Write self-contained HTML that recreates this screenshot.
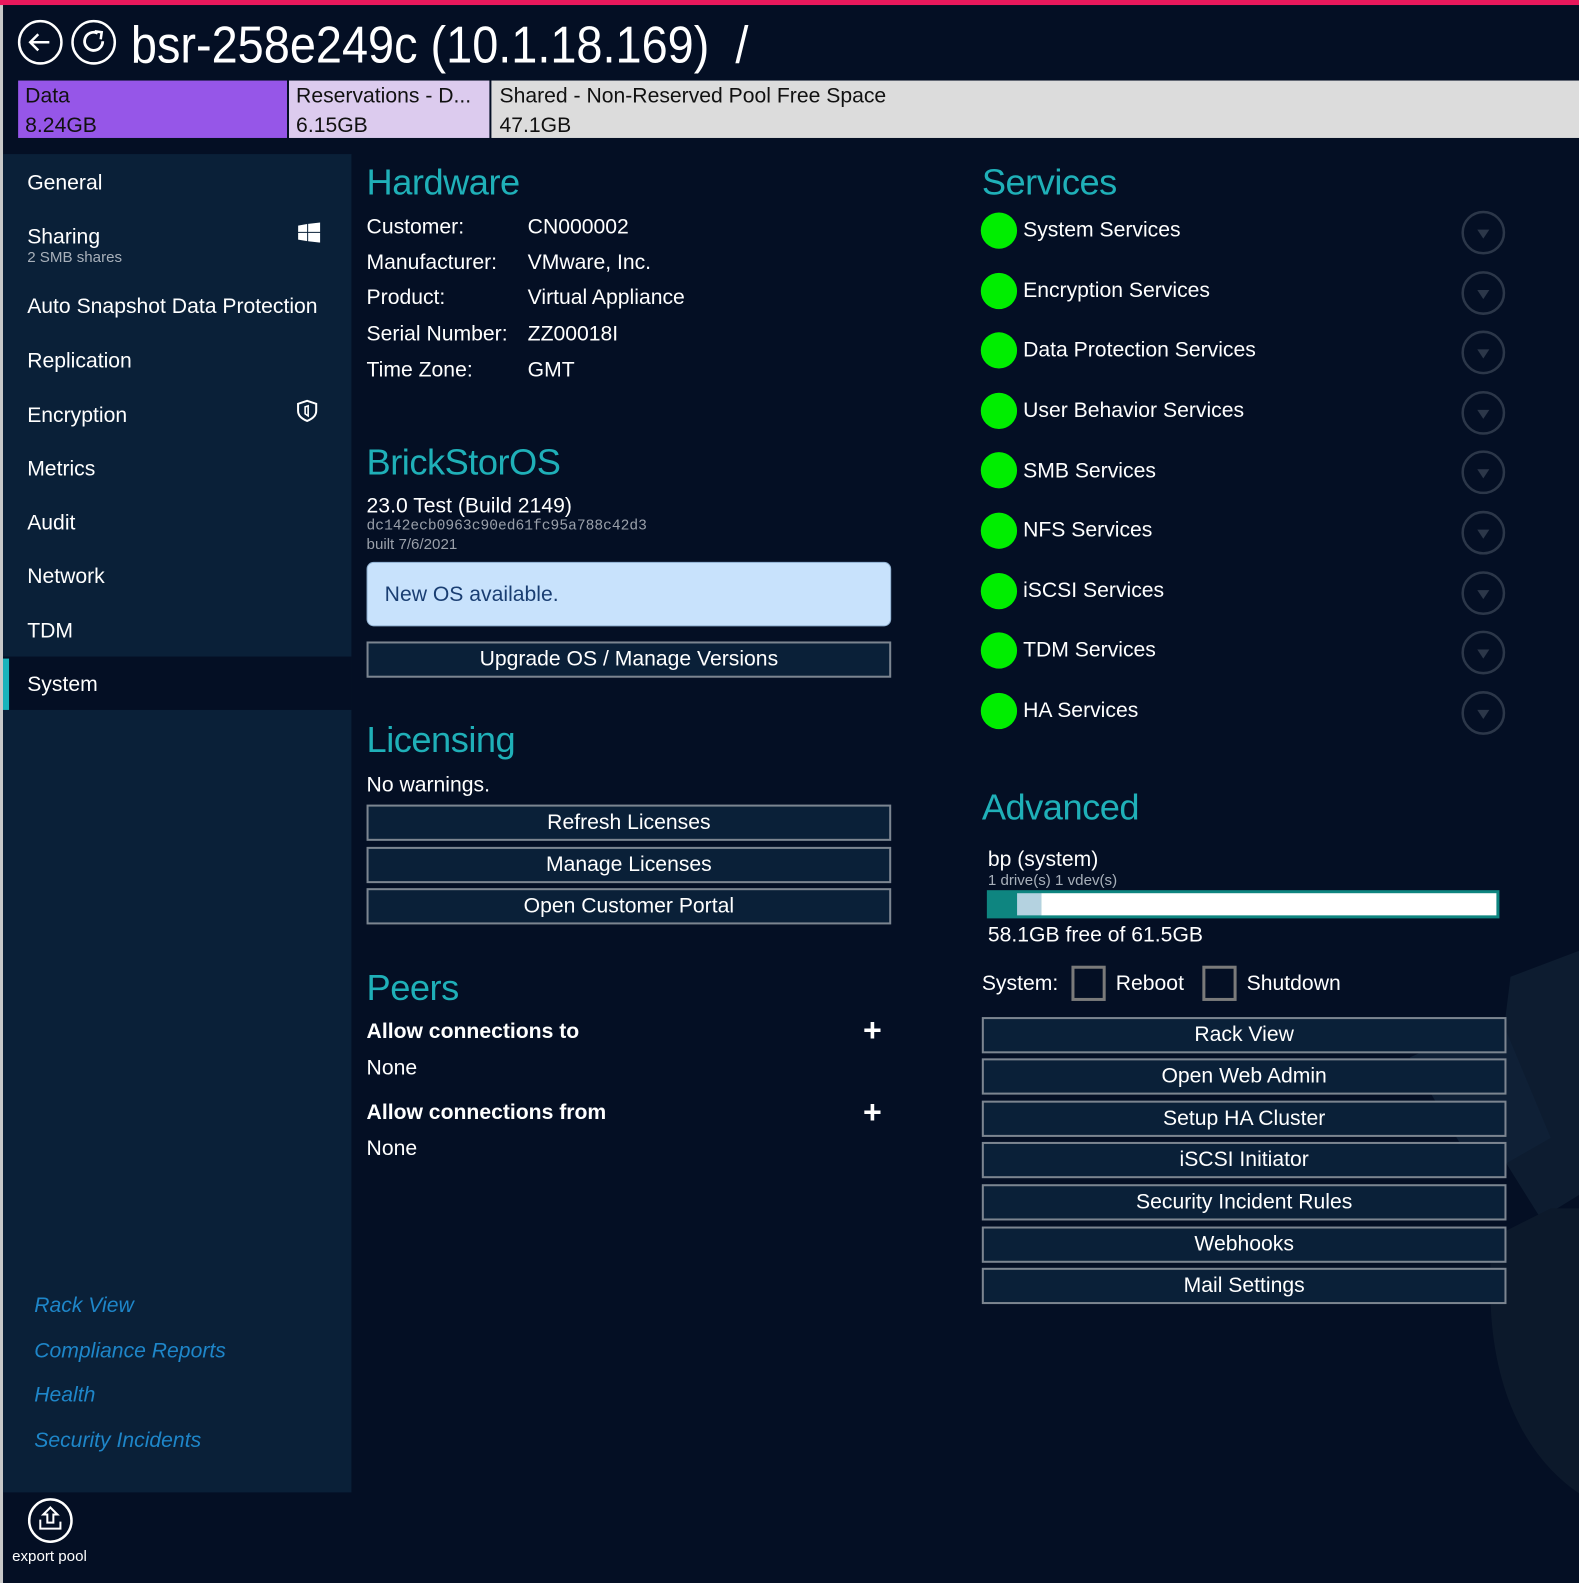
<!DOCTYPE html>
<html><head><meta charset="utf-8"><style>
*{margin:0;padding:0;box-sizing:border-box}
body{width:1579px;height:1572px;background:#040f24;position:relative;overflow:hidden;font-family:"Liberation Sans","DejaVu Sans",sans-serif;color:#fff}
#w{position:absolute;left:0;top:0;width:1568px;height:1561px;transform:scale(1.007);transform-origin:0 0}
.a{position:absolute;white-space:nowrap}
.n{font-size:21px;line-height:30px;height:30px}
.h{font-size:36px;line-height:44px;color:#1fb0b8;font-weight:300;letter-spacing:-0.5px}
.btn{position:absolute;background:#0a2038;border:2px solid #7c8590;font-size:21px;text-align:center;line-height:31px;height:36px}
.lk{font-size:21px;font-style:italic;color:#1e86c9;line-height:30px}
.dot{position:absolute;width:36px;height:36px;border-radius:50%;background:#00ee00;left:974px}
.chev{position:absolute;left:1451px;width:44px;height:44px}
</style></head><body><div id="w">
<div class="a" style="left:0;top:0;width:1579px;height:5px;background:#e8185c"></div>
<div class="a" style="left:0;top:5px;width:3px;height:1567px;background:#c8c8c8"></div>

<svg class="a" style="left:16px;top:18px" width="104" height="50" viewBox="0 0 104 50">
<circle cx="24" cy="24" r="21" fill="none" stroke="#fff" stroke-width="2.5"/>
<path d="M33 24H15M22 16L14 24L22 32" fill="none" stroke="#fff" stroke-width="2.5"/>
<circle cx="77" cy="24" r="21" fill="none" stroke="#fff" stroke-width="2.5"/>
<path d="M86 23A9 9 0 1 1 81 15" fill="none" stroke="#fff" stroke-width="2.8"/>
<path d="M78 13L85 14L84 21" fill="none" stroke="#fff" stroke-width="2.5"/>
</svg>
<div class="a" style="left:130px;top:14px;font-size:52px;line-height:62px;transform:scaleX(0.895);transform-origin:0 0">bsr-258e249c (10.1.18.169) &nbsp;/</div>

<div class="a" style="left:18px;top:80px;width:267px;height:57px;background:#9656e8"></div>
<div class="a" style="left:287px;top:80px;width:199px;height:57px;background:#dccbee"></div>
<div class="a" style="left:488px;top:80px;width:1091px;height:57px;background:#dcdcdc"></div>
<div class="a n" style="left:25px;top:81px;color:#111">Data</div>
<div class="a n" style="left:25px;top:110px;color:#111">8.24GB</div>
<div class="a n" style="left:294px;top:81px;color:#111">Reservations - D...</div>
<div class="a n" style="left:294px;top:110px;color:#111">6.15GB</div>
<div class="a n" style="left:496px;top:81px;color:#111">Shared - Non-Reserved Pool Free Space</div>
<div class="a n" style="left:496px;top:110px;color:#111">47.1GB</div>

<svg class="a" style="left:1380px;top:930px" width="199" height="560" viewBox="0 0 199 560">
<path d="M120 40L199 10V250L150 280L100 200Z" fill="#0d1c30"/>
<path d="M20 120L110 80L160 200L90 240Z" fill="#0f2036"/>
<path d="M199 270V560C130 520 100 440 100 350V300L160 270Z" fill="#0c192b"/>
</svg>

<div class="a" style="left:3px;top:153px;width:346px;height:1329px;background:#0a2038"></div>
<div class="a" style="left:3px;top:652px;width:346px;height:53px;background:#040f24"></div>
<div class="a" style="left:3px;top:654px;width:6px;height:51px;background:#18b4bc"></div>
<div class="a n" style="left:27px;top:167px">General</div>
<div class="a n" style="left:27px;top:221px">Sharing</div>
<div class="a" style="left:27px;top:247px;font-size:15px;color:#a8b0ba">2 SMB shares</div>
<svg class="a" style="left:296px;top:221px" width="22" height="20" viewBox="0 0 22 20"><path d="M0 3L9 1.5V9.3H0ZM10 1.3L22 0V9.3H10ZM0 10.3H9V18.4L0 17ZM10 10.3H22V20L10 18.6Z" fill="#fff"/></svg>
<div class="a n" style="left:27px;top:290px">Auto Snapshot Data Protection</div>
<div class="a n" style="left:27px;top:344px">Replication</div>
<div class="a n" style="left:27px;top:398px">Encryption</div>
<svg class="a" style="left:294px;top:396px" width="22" height="24" viewBox="0 0 22 24"><path d="M11 2L20 5V12C20 17 16 20 11 22C6 20 2 17 2 12V5Z" fill="none" stroke="#fff" stroke-width="2"/><path d="M9 8L12 7V17L9 15Z" fill="none" stroke="#fff" stroke-width="1.6"/></svg>
<div class="a n" style="left:27px;top:451px">Metrics</div>
<div class="a n" style="left:27px;top:505px">Audit</div>
<div class="a n" style="left:27px;top:558px">Network</div>
<div class="a n" style="left:27px;top:612px">TDM</div>
<div class="a n" style="left:27px;top:665px">System</div>
<div class="a lk" style="left:34px;top:1282px">Rack View</div>
<div class="a lk" style="left:34px;top:1327px">Compliance Reports</div>
<div class="a lk" style="left:34px;top:1371px">Health</div>
<div class="a lk" style="left:34px;top:1416px">Security Incidents</div>

<svg class="a" style="left:27px;top:1487px" width="46" height="46" viewBox="0 0 46 46"><circle cx="23" cy="23" r="21" fill="none" stroke="#fff" stroke-width="2.5"/><path d="M23 10L16 17H20V25H26V17H30ZM13 22V31H33V24" fill="none" stroke="#fff" stroke-width="2"/></svg>
<div class="a" style="left:12px;top:1537px;font-size:15px">export pool</div>

<div class="a h" style="left:364px;top:159px">Hardware</div>
<div class="a n" style="left:364px;top:211px">Customer:</div><div class="a n" style="left:524px;top:211px">CN000002</div>
<div class="a n" style="left:364px;top:246px">Manufacturer:</div><div class="a n" style="left:524px;top:246px">VMware, Inc.</div>
<div class="a n" style="left:364px;top:281px">Product:</div><div class="a n" style="left:524px;top:281px">Virtual Appliance</div>
<div class="a n" style="left:364px;top:317px">Serial Number:</div><div class="a n" style="left:524px;top:317px">ZZ00018I</div>
<div class="a n" style="left:364px;top:353px">Time Zone:</div><div class="a n" style="left:524px;top:353px">GMT</div>

<div class="a h" style="left:364px;top:437px">BrickStorOS</div>
<div class="a n" style="left:364px;top:488px">23.0 Test (Build 2149)</div>
<div class="a" style="left:364px;top:515px;font-family:'Liberation Mono',monospace;font-size:14.5px;color:#9aa0aa">dc142ecb0963c90ed61fc95a788c42d3</div>
<div class="a" style="left:364px;top:532px;font-size:15px;color:#9aa0aa">built 7/6/2021</div>
<div class="a" style="left:364px;top:558px;width:521px;height:64px;background:#c8e2fc;border-radius:7px;border:1px solid #8fb0d0"></div>
<div class="a n" style="left:382px;top:576px;color:#1a3e72">New OS available.</div>
<div class="btn" style="left:364px;top:637px;width:521px">Upgrade OS / Manage Versions</div>

<div class="a h" style="left:364px;top:713px">Licensing</div>
<div class="a n" style="left:364px;top:765px">No warnings.</div>
<div class="btn" style="left:364px;top:799px;width:521px">Refresh Licenses</div>
<div class="btn" style="left:364px;top:841px;width:521px">Manage Licenses</div>
<div class="btn" style="left:364px;top:882px;width:521px">Open Customer Portal</div>

<div class="a h" style="left:364px;top:959px">Peers</div>
<div class="a n" style="left:364px;top:1010px;font-weight:bold">Allow connections to</div>
<div class="a" style="left:857px;top:1006px;font-size:32px;font-weight:bold;line-height:34px">+</div>
<div class="a n" style="left:364px;top:1046px">None</div>
<div class="a n" style="left:364px;top:1090px;font-weight:bold">Allow connections from</div>
<div class="a" style="left:857px;top:1087px;font-size:32px;font-weight:bold;line-height:34px">+</div>
<div class="a n" style="left:364px;top:1126px">None</div>

<div class="a h" style="left:975px;top:159px">Services</div>
<div class="dot" style="top:211px"></div><div class="a n" style="left:1016px;top:214px">System Services</div>
<div class="dot" style="top:271px"></div><div class="a n" style="left:1016px;top:274px">Encryption Services</div>
<div class="dot" style="top:330px"></div><div class="a n" style="left:1016px;top:333px">Data Protection Services</div>
<div class="dot" style="top:390px"></div><div class="a n" style="left:1016px;top:393px">User Behavior Services</div>
<div class="dot" style="top:449px"></div><div class="a n" style="left:1016px;top:453px">SMB Services</div>
<div class="dot" style="top:509px"></div><div class="a n" style="left:1016px;top:512px">NFS Services</div>
<div class="dot" style="top:569px"></div><div class="a n" style="left:1016px;top:572px">iSCSI Services</div>
<div class="dot" style="top:628px"></div><div class="a n" style="left:1016px;top:631px">TDM Services</div>
<div class="dot" style="top:688px"></div><div class="a n" style="left:1016px;top:691px">HA Services</div>
<svg class="chev" style="top:209px" viewBox="0 0 44 44"><circle cx="22" cy="22" r="20.5" fill="none" stroke="#2c3749" stroke-width="2.5"/><path d="M16 19H28L22 28Z" fill="#2c3749"/></svg>
<svg class="chev" style="top:269px" viewBox="0 0 44 44"><circle cx="22" cy="22" r="20.5" fill="none" stroke="#2c3749" stroke-width="2.5"/><path d="M16 19H28L22 28Z" fill="#2c3749"/></svg>
<svg class="chev" style="top:328px" viewBox="0 0 44 44"><circle cx="22" cy="22" r="20.5" fill="none" stroke="#2c3749" stroke-width="2.5"/><path d="M16 19H28L22 28Z" fill="#2c3749"/></svg>
<svg class="chev" style="top:388px" viewBox="0 0 44 44"><circle cx="22" cy="22" r="20.5" fill="none" stroke="#2c3749" stroke-width="2.5"/><path d="M16 19H28L22 28Z" fill="#2c3749"/></svg>
<svg class="chev" style="top:447px" viewBox="0 0 44 44"><circle cx="22" cy="22" r="20.5" fill="none" stroke="#2c3749" stroke-width="2.5"/><path d="M16 19H28L22 28Z" fill="#2c3749"/></svg>
<svg class="chev" style="top:507px" viewBox="0 0 44 44"><circle cx="22" cy="22" r="20.5" fill="none" stroke="#2c3749" stroke-width="2.5"/><path d="M16 19H28L22 28Z" fill="#2c3749"/></svg>
<svg class="chev" style="top:567px" viewBox="0 0 44 44"><circle cx="22" cy="22" r="20.5" fill="none" stroke="#2c3749" stroke-width="2.5"/><path d="M16 19H28L22 28Z" fill="#2c3749"/></svg>
<svg class="chev" style="top:626px" viewBox="0 0 44 44"><circle cx="22" cy="22" r="20.5" fill="none" stroke="#2c3749" stroke-width="2.5"/><path d="M16 19H28L22 28Z" fill="#2c3749"/></svg>
<svg class="chev" style="top:686px" viewBox="0 0 44 44"><circle cx="22" cy="22" r="20.5" fill="none" stroke="#2c3749" stroke-width="2.5"/><path d="M16 19H28L22 28Z" fill="#2c3749"/></svg>

<div class="a h" style="left:975px;top:780px">Advanced</div>
<div class="a n" style="left:981px;top:839px">bp (system)</div>
<div class="a" style="left:981px;top:866px;font-size:15px;color:#a8b0ba">1 drive(s) 1 vdev(s)</div>
<div class="a" style="left:980px;top:884px;width:509px;height:28px;background:#0e8580"></div>
<div class="a" style="left:1010px;top:887px;width:24px;height:22px;background:#b4d2e0"></div>
<div class="a" style="left:1034px;top:887px;width:452px;height:22px;background:#fff"></div>
<div class="a n" style="left:981px;top:914px">58.1GB free of 61.5GB</div>
<div class="a n" style="left:975px;top:962px">System:</div>
<div class="a" style="left:1064px;top:959px;width:34px;height:35px;border:3px solid #7a7a7a"></div>
<div class="a n" style="left:1108px;top:962px">Reboot</div>
<div class="a" style="left:1194px;top:959px;width:34px;height:35px;border:3px solid #7a7a7a"></div>
<div class="a n" style="left:1238px;top:962px">Shutdown</div>
<div class="btn" style="left:975px;top:1010px;width:521px">Rack View</div>
<div class="btn" style="left:975px;top:1051px;width:521px">Open Web Admin</div>
<div class="btn" style="left:975px;top:1093px;width:521px">Setup HA Cluster</div>
<div class="btn" style="left:975px;top:1134px;width:521px">iSCSI Initiator</div>
<div class="btn" style="left:975px;top:1176px;width:521px">Security Incident Rules</div>
<div class="btn" style="left:975px;top:1218px;width:521px">Webhooks</div>
<div class="btn" style="left:975px;top:1259px;width:521px">Mail Settings</div>
</div></body></html>
